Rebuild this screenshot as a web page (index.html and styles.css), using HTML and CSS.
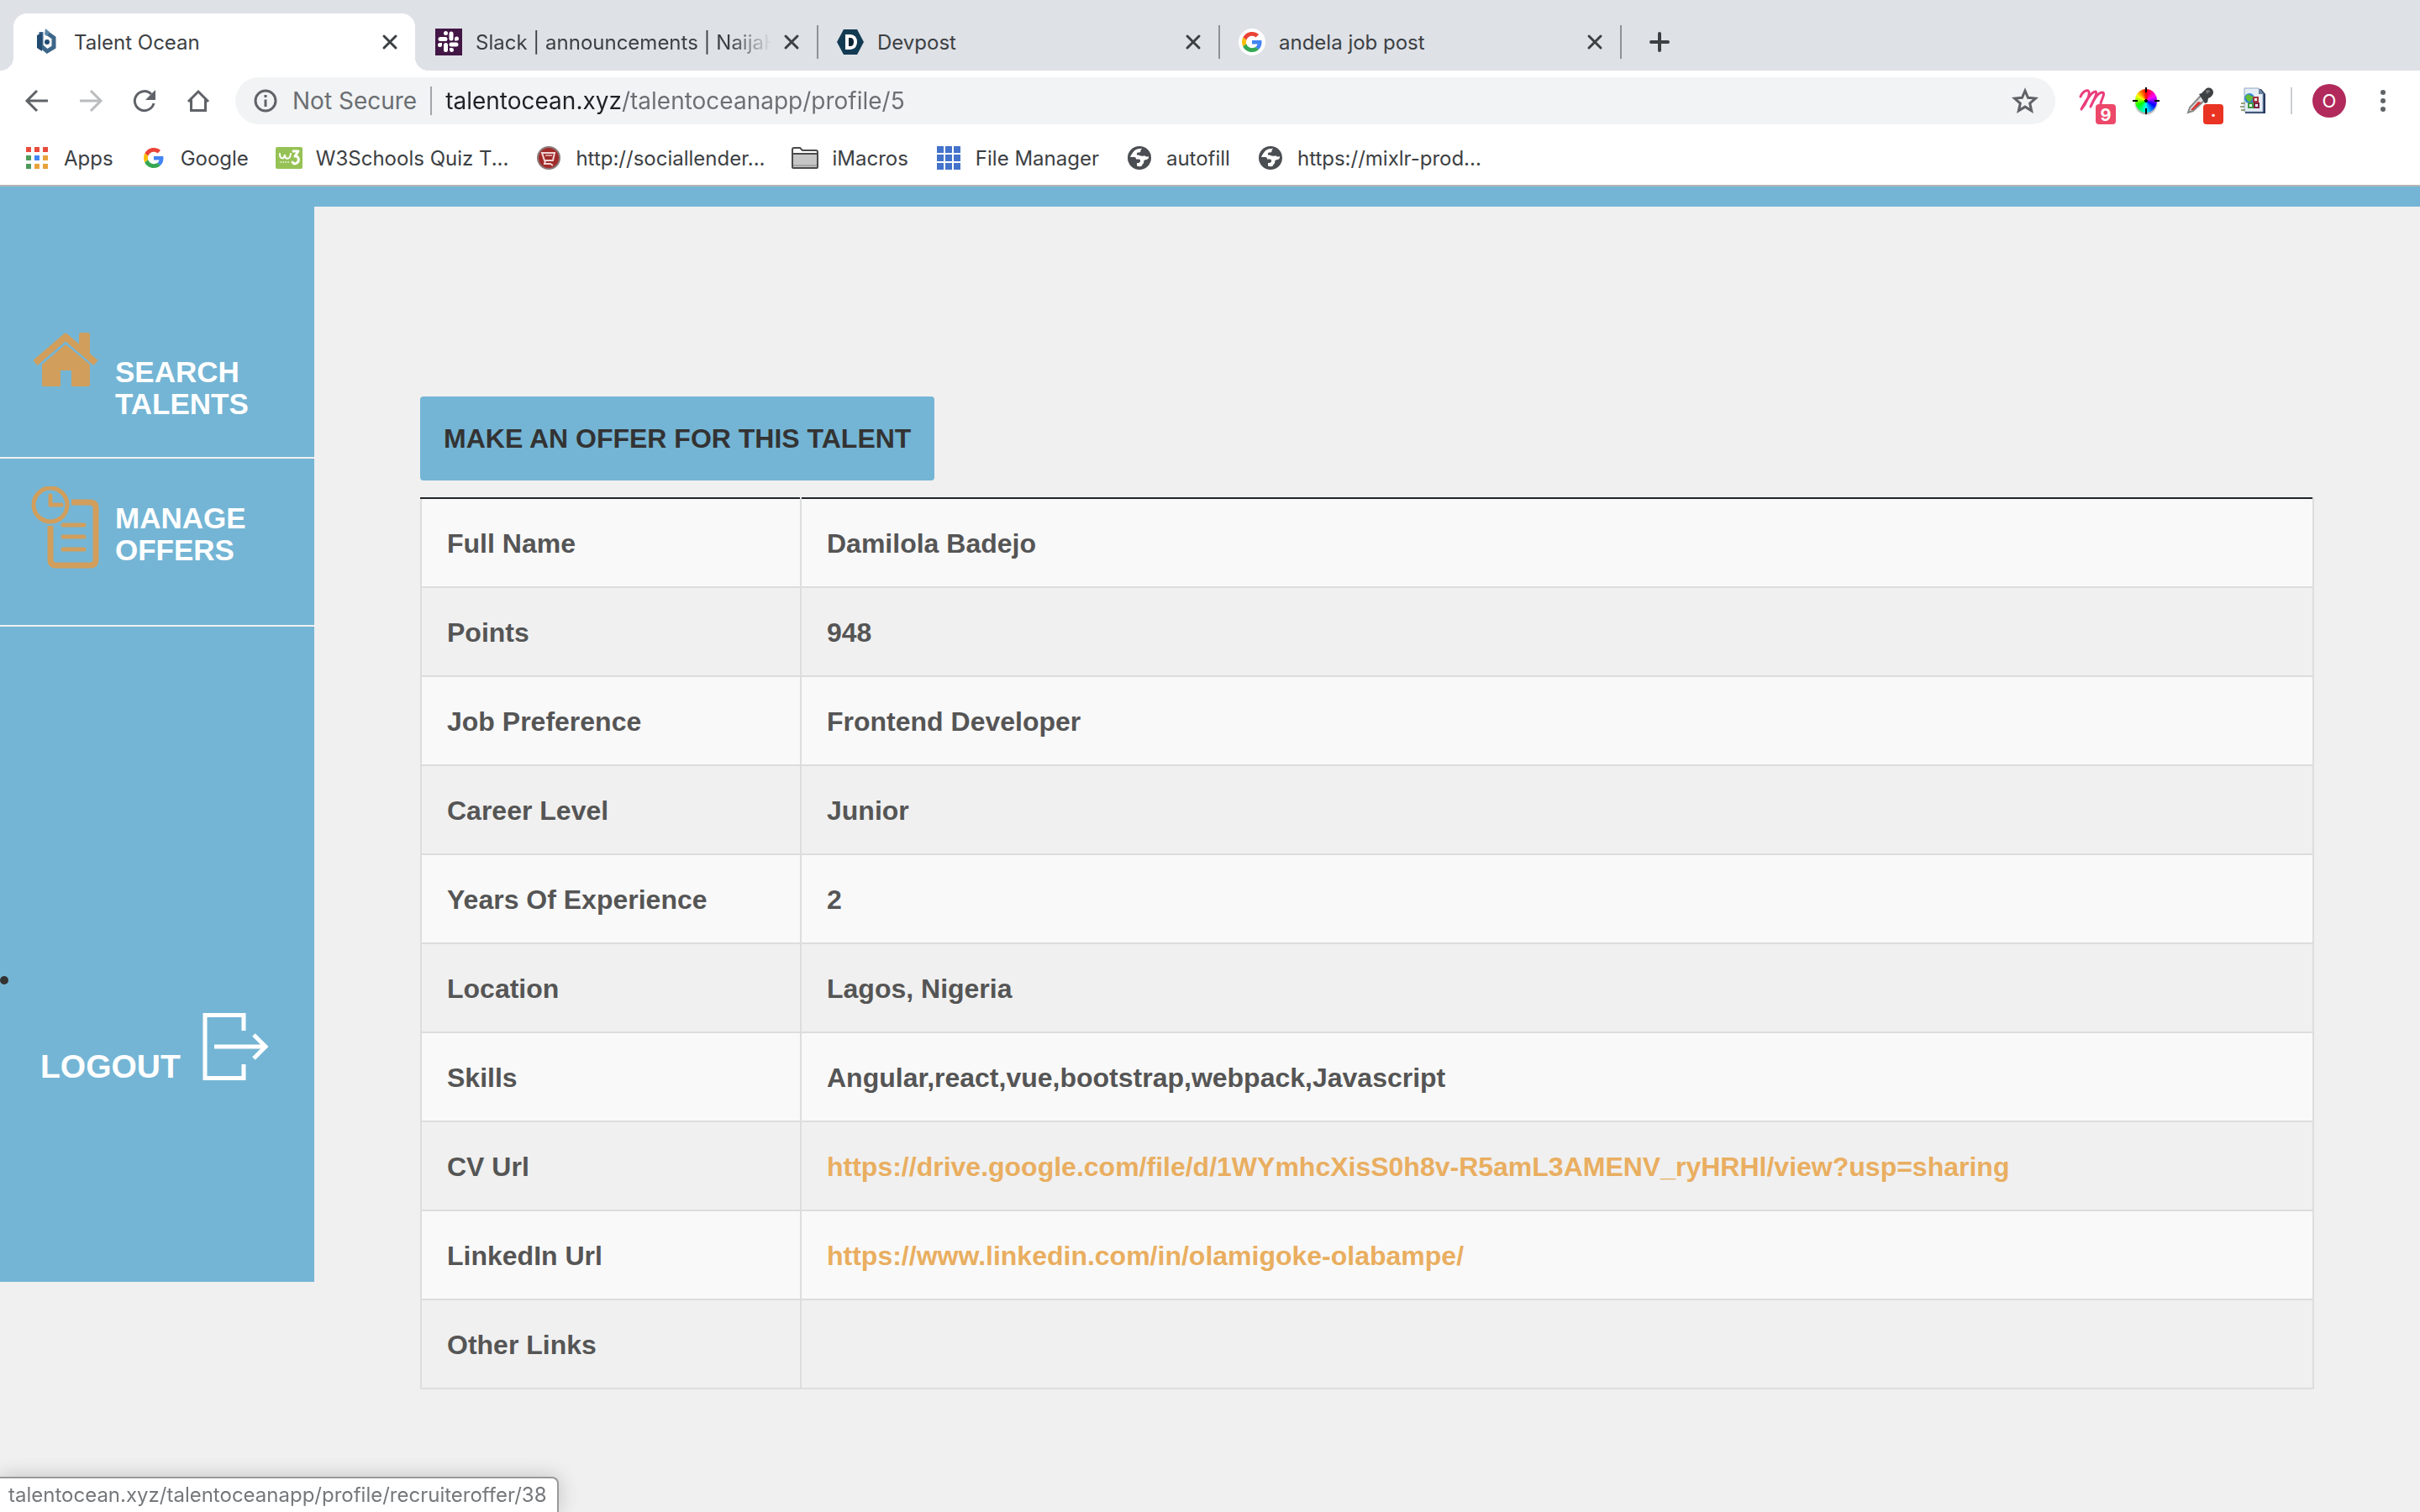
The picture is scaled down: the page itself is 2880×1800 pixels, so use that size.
FILE: index.html
```html
<!DOCTYPE html>
<html lang="en">
<head>
    <meta charset="UTF-8">
    <meta name="viewport" content="width=device-width, initial-scale=1.0">
    <title>Talent Ocean</title>
    <link rel="stylesheet" href="styles.css">
</head>
<body>

<!-- Shared icons -->
<svg class="sprite" aria-hidden="true">
    <symbol id="close" viewBox="0 0 32 32">
        <path d="M9 9l14 14M23 9L9 23" fill="none" stroke="#3c4043" stroke-width="3" stroke-linecap="round"/>
    </symbol>
    <symbol id="google" viewBox="0 0 48 48">
        <path fill="#ea4335" d="M24 9.500c3.500 0 6.700 1.200 9.200 3.600l6.900-6.900C35.900 2.400 30.500 0 24 0 14.600 0 6.500 5.400 2.600 13.200l8 6.200C12.400 13.700 17.700 9.500 24 9.500z"/>
        <path fill="#4285f4" d="M47 24.500c0-1.600-.2-3.100-.4-4.500H24v9h12.900c-.6 3-2.300 5.500-4.800 7.200l7.700 6C44.400 38 47 31.800 47 24.500z"/>
        <path fill="#fbbc05" d="M10.500 28.600c-.5-1.500-.8-3-.8-4.600s.3-3.100.8-4.600l-8-6.200C.9 16.500 0 20.100 0 24s.9 7.500 2.600 10.800l7.900-6.200z"/>
        <path fill="#34a853" d="M24 48c6.500 0 11.900-2.100 15.900-5.800l-7.700-6c-2.200 1.500-4.900 2.300-8.200 2.300-6.300 0-11.600-4.200-13.500-9.900l-8 6.200C6.500 42.600 14.600 48 24 48z"/>
    </symbol>
    <symbol id="globe" viewBox="0 0 32 32">
        <circle cx="16" cy="16" r="14" fill="#4b4e52"/>
        <path fill="#fff" d="M18 5c-4-.5-7 1-9 3.500-1.500 2-3 4-4 6.500h5c1.500 0 2 1 2 2.500h3c2 0 2 1 2 2.500 0 1-1 1.500-2 2h-2v3.500c2 1 4 1 6 0 0-2 1.500-2 2-3.500.5-1 0-2 .5-3 1-1 3-.5 5-2 .5-1 .5-2 .5-3-2 1-4 .5-5-1-1 1-2.500 1-4 .5-2-.5-3.500-1-5-1-.5-1.500 0-2.500 1-3h2c1 0 1.500-1 1.500-2 0-1.500 2-2 .5-3.500z"/>
    </symbol>
</svg>

<header class="browser">
    <div class="tab-strip">
        <div class="tab active">
            <svg class="favicon" viewBox="0 0 32 32">
                <path d="M9 4v17l7 6 8-5V11l-7-5" fill="none" stroke="#3d6689" stroke-width="5"/>
                <path d="M4 8v15l6 4V5z" fill="#234a70"/>
                <path d="M14 0l5 4-3 5-3-2z" fill="#5d86a6"/>
                <circle cx="16" cy="16" r="3" fill="#234a70"/>
            </svg>
            <a href="#" class="tab-title">Talent Ocean</a>
            <button class="tab-close" aria-label="Close tab"><svg><use href="#close"/></svg></button>
        </div>
        <div class="tab">
            <svg class="favicon" viewBox="0 0 32 32">
                <rect width="32" height="32" fill="#421645"/>
                <path d="M12.500 19.500v6M12 12.500H6M19 12V6M19 19h6" stroke="#fff" stroke-width="5" stroke-linecap="round"/>
                <path d="M12.500 8a2.500 2.500 0 1 0-2.500-2.500 2.500 2.500 0 0 0 2.500 2.500zM25.500 14.500H23V12a2.500 2.500 0 1 1 2.500 2.500zM19 23h-2v2.500a2.500 2.500 0 1 0 2-2.500zM8 17H5.500a2.500 2.500 0 1 0 2.500 2.500z" fill="#fff"/>
            </svg>
            <a href="#" class="tab-title faded">Slack | announcements | NaijaH</a>
            <button class="tab-close" aria-label="Close tab"><svg><use href="#close"/></svg></button>
        </div>
        <div class="tab divided">
            <svg class="favicon" viewBox="0 0 32 32">
                <path d="M8 1h16l8 15-8 15H8L0 16z" fill="#123b53"/>
                <path d="M12 9h4c4 0 6 3 6 7s-2 7-6 7h-4z" fill="#0c2434" stroke="#fff" stroke-width="4"/>
            </svg>
            <a href="#" class="tab-title">Devpost</a>
            <button class="tab-close" aria-label="Close tab"><svg><use href="#close"/></svg></button>
        </div>
        <div class="tab divided">
            <svg class="favicon" viewBox="0 0 32 32">
                <circle cx="16" cy="16" r="16" fill="#fff"/>
                <use href="#google" x="4" y="4" width="24" height="24"/>
            </svg>
            <a href="#" class="tab-title">andela job post</a>
            <button class="tab-close" aria-label="Close tab"><svg><use href="#close"/></svg></button>
        </div>
        <button class="new-tab" aria-label="New tab">
            <svg viewBox="0 0 32 32"><path d="M16 6v20M6 16h20" stroke="#3c4043" stroke-width="4" stroke-linecap="round"/></svg>
        </button>
    </div>

    <div class="toolbar">
        <button class="tool" aria-label="Back">
            <svg viewBox="0 0 32 32"><path d="M29 16H5M16 4L4 16l12 12" fill="none" stroke="#5f6368" stroke-width="3"/></svg>
        </button>
        <button class="tool" aria-label="Forward">
            <svg viewBox="0 0 32 32"><path d="M3 16h24M16 4l12 12-12 12" fill="none" stroke="#babcbe" stroke-width="3"/></svg>
        </button>
        <button class="tool" aria-label="Reload">
            <svg viewBox="0 0 32 32"><path d="M27 19a11.500 11.500 0 1 1-3-11" fill="none" stroke="#5f6368" stroke-width="3"/><path d="M29 3v12H17z" fill="#5f6368"/></svg>
        </button>
        <button class="tool" aria-label="Home">
            <svg viewBox="0 0 32 32"><path d="M4 17L16 5l12 12M7.500 14v13.500h17V14" fill="none" stroke="#5f6368" stroke-width="3"/></svg>
        </button>

        <div class="address-bar">
            <svg viewBox="0 0 32 32">
                <circle cx="16" cy="16" r="12" fill="none" stroke="#5f6368" stroke-width="3"/>
                <path d="M16 9v3M16 14.500v8.500" stroke="#5f6368" stroke-width="3"/>
            </svg>
            <label for="address" class="security">Not Secure</label>
            <input type="text" id="address" class="address" value="talentocean.xyz/talentoceanapp/profile/5">
            <button class="star" aria-label="Bookmark this page">
                <svg viewBox="0 0 32 32"><path d="M16 4l3.500 8.300 9 .8-6.800 5.900 2 8.800L16 23.100l-7.700 4.700 2-8.800-6.800-5.900 9-.8z" fill="none" stroke="#5f6368" stroke-width="3"/></svg>
            </button>
        </div>

        <div class="extensions">
            <button class="tool" aria-label="Momentum">
                <svg viewBox="0 0 32 32"><path d="M2 11C4 6 8 3 11 4c4 3-3 16-8 22C9 15 15 5 20 5c3 2-4 13-6 18C18 14 23 6 28 6c4 1-1 8-2 13" fill="none" stroke="#ea3d7c" stroke-width="3" stroke-linecap="round" stroke-linejoin="round"/></svg>
                <span class="badge pink">9</span>
            </button>
            <button class="tool" aria-label="Color picker">
                <span class="wheel"><svg viewBox="0 0 32 32"><path d="M16 0v6M16 25v7M0 16h6M26 16h6M16 14v4M14 16h4" stroke="#000" stroke-width="2"/></svg></span>
            </button>
            <button class="tool" aria-label="Eyedropper">
                <svg viewBox="0 0 32 32">
                    <path d="M2 30l2-6L17 10l5 5L8 28z" fill="#ddd" stroke="#888" stroke-width="2"/>
                    <path d="M5 27l9-10 4 1L8 27z" fill="#d93434"/>
                    <path d="M15 8l3-1 5-5c3-3 9-1 9 4 0 3-3 6-6 7l-1 5-3 1z" fill="#3d4144"/>
                    <path d="M23 4c2-2 5-1 5 1l-4 3z" fill="#777"/>
                </svg>
                <span class="badge red">·</span>
            </button>
            <button class="tool" aria-label="Page tool">
                <svg viewBox="0 0 32 32">
                    <path d="M6 2h19l5 6v23H6z" fill="#26395e"/>
                    <path d="M5 1h17l5 6v22H5z" fill="#e5edf6" stroke="#8fa6c0" stroke-width="1"/>
                    <path d="M22 1v7h6z" fill="#68809c"/>
                    <circle cx="11" cy="13" r="6" fill="#3285cf"/>
                    <path d="M6 12c3-5 5-4 6-2l4 1-3 5c-3 3-4 0-7-4z" fill="#61bd32"/>
                    <g fill="#eef2f8" stroke-width="2">
                        <path d="M16 12h5v5h-5z" stroke="#a2333e"/>
                        <path d="M10 19h5v5h-5z" stroke="#3f9b42"/>
                        <path d="M17 19h5v5h-5z" stroke="#7a2545"/>
                    </g>
                    <path d="M1 19h5M0 23h5M1 27h5" stroke="#96a17e" stroke-width="2"/>
                </svg>
            </button>
        </div>
        <button class="avatar" aria-label="Profile">O</button>
        <button class="tool menu" aria-label="Menu">
            <svg viewBox="0 0 32 32"><g fill="#5f6368"><circle cx="16" cy="6" r="3"/><circle cx="16" cy="16" r="3"/><circle cx="16" cy="26" r="3"/></g></svg>
        </button>
    </div>

    <nav class="bookmarks">
        <a href="#">
            <svg viewBox="0 0 32 32">
                <path d="M3 3h6v6H3zM13 3h6v6h-6zM23 3h6v6h-6z" fill="#e94b3c"/>
                <path d="M3 13h6v6H3zM3 23h6v6H3z" fill="#4e9a5b"/>
                <path d="M13 13h6v6h-6z" fill="#4285f4"/>
                <path d="M23 13h6v6h-6zM13 23h6v6h-6zM23 23h6v6h-6z" fill="#e8a33b"/>
            </svg>
            Apps
        </a>
        <a href="#">
            <svg viewBox="0 0 32 32"><use href="#google" x="4" y="4" width="24" height="24"/></svg>
            Google
        </a>
        <a href="#">
            <svg viewBox="0 0 32 32">
                <rect y="3" width="32" height="26" rx="2" fill="#96c255"/>
                <path d="M5 11c0 7 5 7 6 1 0 6 6 7 7-1" fill="none" stroke="#fff" stroke-width="2" stroke-linecap="round"/>
                <path d="M21 8h6l-4 6c6-1 6 9-1 9l-2-2" fill="none" stroke="#fff" stroke-width="3" stroke-linecap="round" stroke-linejoin="round"/>
                <path d="M5 21h11" stroke="#e3f0cd" stroke-width="2" stroke-dasharray="1 1"/>
            </svg>
            W3Schools Quiz T...
        </a>
        <a href="#">
            <svg viewBox="0 0 32 32">
                <circle cx="16" cy="16" r="13" fill="#a12b2b" stroke="#8d7a7a" stroke-width="2"/>
                <path d="M8 10h15l-2 9H11zM12 19l-1 4h7l3 2" fill="none" stroke="#f0d6d6" stroke-width="2"/>
                <path d="M12 13h8" stroke="#d49a9a" stroke-width="2"/>
            </svg>
            http://sociallender...
        </a>
        <a href="#">
            <svg viewBox="0 0 32 32">
                <path d="M1 27V6c0-1 1-2 2-2h7l3 3h16c1 0 2 1 2 2v18c0 1-1 1-1 1H2c-1 0-1-1-1-1z" fill="#fff" stroke="#4a4a4a" stroke-width="2"/>
                <path d="M2 11h28v16H2z" fill="#c6c6c6"/>
                <path d="M1 11h30" stroke="#4a4a4a" stroke-width="2"/>
                <path d="M2 25h28" stroke="#a5a5a5" stroke-width="2"/>
            </svg>
            iMacros
        </a>
        <a href="#">
            <svg viewBox="0 0 32 32"><path d="M2 2h8v8H2zM12 2h8v8h-8zM22 2h8v8h-8zM2 12h8v8H2zM12 12h8v8h-8zM22 12h8v8h-8zM2 22h8v8H2zM12 22h8v8h-8zM22 22h8v8h-8z" fill="#4473cc"/></svg>
            File Manager
        </a>
        <a href="#"><svg><use href="#globe"/></svg>autofill</a>
        <a href="#"><svg><use href="#globe"/></svg>https://mixlr-prod...</a>
    </nav>
</header>

<div class="top-bar"></div>

<div class="page">
    <aside class="sidebar">
        <ul class="menu-list">
            <li class="search">
                <a href="#">
                    <svg viewBox="0 0 82 98">
                        <path d="M5 36L41 5l36 31" fill="none" stroke="#d19e5c" stroke-width="8" stroke-linejoin="round"/>
                        <path d="M57 3q0-3 3-3h8q2 0 2 3v25L57 17z" fill="#d19e5c"/>
                        <path d="M41 14l29 24v24q0 2-2 2H48V45H35v19H15q-2 0-2-2V38z" fill="#d19e5c"/>
                    </svg>
                    <span>SEARCH<br>TALENTS</span>
                </a>
            </li>
            <li class="manage">
                <a href="#">
                    <svg viewBox="0 0 82 98">
                        <g fill="none" stroke="#d19e5c">
                            <circle cx="23" cy="22" r="20" stroke-width="5"/>
                            <path d="M23 11v11h13" stroke-width="5" stroke-linecap="round" stroke-linejoin="round"/>
                            <path d="M48 19h22q7 0 7 7v61q0 7-7 7H30q-7 0-7-7V47" stroke-width="7"/>
                            <path d="M38 46h25M38 60h25M38 75h25" stroke-width="5" stroke-linecap="round"/>
                        </g>
                    </svg>
                    <span>MANAGE<br>OFFERS</span>
                </a>
            </li>
            <li class="logout">
                <a href="#">
                    <span>LOGOUT</span>
                    <svg viewBox="0 0 80 80">
                        <path d="M49 21V2.500H3v75h46V61M14 40h60M61 26l14 14-14 14" fill="none" stroke="#fff" stroke-width="5"/>
                    </svg>
                </a>
            </li>
        </ul>
    </aside>

    <main class="content">
        <button class="offer-button">MAKE AN OFFER FOR THIS TALENT</button>

        <table class="profile">
            <tr><th scope="row">Full Name</th><td>Damilola Badejo</td></tr>
            <tr><th scope="row">Points</th><td>948</td></tr>
            <tr><th scope="row">Job Preference</th><td>Frontend Developer</td></tr>
            <tr><th scope="row">Career Level</th><td>Junior</td></tr>
            <tr><th scope="row">Years Of Experience</th><td>2</td></tr>
            <tr><th scope="row">Location</th><td>Lagos, Nigeria</td></tr>
            <tr><th scope="row">Skills</th><td>Angular,react,vue,bootstrap,webpack,Javascript</td></tr>
            <tr><th scope="row">CV Url</th><td><a href="#">https://drive.google.com/file/d/1WYmhcXisS0h8v-R5amL3AMENV_ryHRHl/view?usp=sharing</a></td></tr>
            <tr><th scope="row">LinkedIn Url</th><td><a href="#">https://www.linkedin.com/in/olamigoke-olabampe/</a></td></tr>
            <tr><th scope="row">Other Links</th><td></td></tr>
        </table>
    </main>
</div>

<div class="status">talentocean.xyz/talentoceanapp/profile/recruiteroffer/38</div>

</body>
</html>
```

FILE: styles.css
```css
* {
    box-sizing: border-box;
}
body {
    margin: 0;
    min-height: 100vh;
    background-color: #f0f0f0;
    font-family: "Liberation Sans", Arial, sans-serif;
    color: #333;
}
a {
    color: inherit;
    text-decoration: none;
}
button {
    margin: 0;
    padding: 0;
    border: none;
    background: none;
    font-family: inherit;
    cursor: pointer;
}
.sprite {
    display: none;
}

/* Browser frame */
.browser {
    background-color: #fff;
    border-bottom: 2px solid #b6b6b6;
    font-family: Inter, Roboto, sans-serif;
    font-size: 24px;
    color: #3c4043;
}
.browser svg {
    display: block;
    flex: none;
    width: 32px;
    height: 32px;
}
.tab-strip {
    display: flex;
    align-items: center;
    height: 84px;
    padding: 16px 16px 0;
    background-color: #dee1e6;
}
.tab {
    display: flex;
    align-items: center;
    gap: 16px;
    width: 478px;
    height: 40px;
    padding: 0 14px 0 24px;
}
.tab.active {
    position: relative;
    height: 68px;
    background-color: #fff;
    border-radius: 16px 16px 0 0;
}
.tab.active::before,
.tab.active::after {
    content: "";
    position: absolute;
    bottom: 0;
    width: 16px;
    height: 16px;
}
.tab.active::before {
    left: -16px;
    background: radial-gradient(circle at 0 0, #dee1e6 16px, #fff 16px);
}
.tab.active::after {
    right: -16px;
    background: radial-gradient(circle at 100% 0, #dee1e6 16px, #fff 16px);
}
.tab.divided {
    padding-left: 22px;
    border-left: 2px solid #8e9196;
}
.tab-title {
    flex: 1;
    min-width: 0;
    white-space: nowrap;
}
.tab-title.faded {
    -webkit-mask-image: linear-gradient(to right, #000 86%, transparent 100%);
    mask-image: linear-gradient(to right, #000 86%, transparent 100%);
}
.tab-close {
    margin-left: -8px;
}
.new-tab {
    display: flex;
    align-items: center;
    justify-content: center;
    width: 92px;
    height: 40px;
    border-left: 2px solid #8e9196;
}
.toolbar {
    display: flex;
    align-items: center;
    height: 72px;
    padding: 0 12px;
}
.tool {
    position: relative;
    display: flex;
    align-items: center;
    justify-content: center;
    width: 64px;
    height: 56px;
}
.address-bar {
    flex: 1;
    display: flex;
    align-items: center;
    gap: 16px;
    height: 56px;
    margin: 0 12px;
    padding: 0 20px;
    background-color: #f1f3f4;
    border-radius: 28px;
    font-size: 28px;
}
.security {
    padding-right: 16px;
    border-right: 2px solid #a3a6a9;
    color: #6b6e72;
}
.address {
    flex: 1;
    padding: 0;
    border: none;
    outline: none;
    font: inherit;
    color: transparent;
    /* host name is darker than the path */
    background: linear-gradient(to right, #202124 210px, #6b6e72 210px);
    -webkit-background-clip: text;
    background-clip: text;
}
.extensions {
    display: flex;
}
.extensions::after {
    content: "";
    width: 2px;
    height: 32px;
    margin: 12px 24px 0 12px;
    background-color: #ccced1;
}
.badge {
    position: absolute;
    right: 4px;
    bottom: 0;
    width: 24px;
    height: 24px;
    border-radius: 4px;
    color: #fff;
    font-size: 20px;
    font-weight: bold;
    line-height: 26px;
    text-align: center;
}
.badge.pink {
    background-color: #ec4869;
}
.badge.red {
    background-color: #e93323;
}
.wheel {
    display: flex;
    align-items: center;
    justify-content: center;
    width: 26px;
    height: 28px;
    background: conic-gradient(red, magenta, blue, cyan, lime, yellow, red);
    border-radius: 50%;
    box-shadow: 0 2px 2px rgba(0, 0, 0, 0.4);
}
.avatar {
    width: 40px;
    height: 40px;
    border-radius: 50%;
    background-color: #b12a5b;
    color: #fff;
    font-size: 22px;
}
.menu {
    margin-left: 12px;
}
.bookmarks {
    display: flex;
    align-items: center;
    gap: 32px;
    height: 64px;
    padding-left: 28px;
}
.bookmarks a {
    display: flex;
    align-items: center;
    gap: 16px;
    white-space: nowrap;
}

/* Page */
.top-bar {
    height: 24px;
    background-color: #74b5d5;
}
.page {
    display: flex;
    align-items: flex-start;
}
.sidebar {
    flex: none;
    width: 374px;
    padding-bottom: 240px;
    background-color: #74b5d5;
    color: #fff;
    font-size: 35px;
    font-weight: bold;
    line-height: 38px;
}
.menu-list {
    margin: 0;
    padding: 0;
    list-style: none;
}
.menu-list a {
    display: flex;
    gap: 18px;
    padding-left: 37px;
}
.menu-list svg {
    display: block;
    width: 82px;
    height: 98px;
}
.search,
.manage {
    border-bottom: 2px solid #f0f0f0;
}
.search {
    height: 300px;
    padding-top: 150px;
}
.search span {
    padding-top: 28px;
}
.manage {
    height: 200px;
    padding-top: 33px;
}
.manage span {
    padding-top: 19px;
}
.logout {
    padding-top: 416px;
    font-size: 39px;
    line-height: 32px;
}
.logout::before {
    content: "";
    display: block;
    width: 10px;
    height: 10px;
    margin-bottom: 34px;
    border-radius: 50%;
    background-color: #333;
}
.logout a {
    align-items: flex-end;
    gap: 26px;
    padding-left: 48px;
}
.logout svg {
    width: 80px;
    height: 80px;
}
.content {
    flex: 1;
    padding: 226px 126px 60px;
}
.offer-button {
    display: block;
    height: 100px;
    margin-bottom: 20px;
    padding: 0 28px;
    background-color: #74b5d5;
    border-radius: 4px;
    color: #333;
    font-size: 32px;
    font-weight: bold;
}
.profile {
    width: 100%;
    border-collapse: collapse;
    font-size: 32px;
    line-height: 40px;
    font-weight: bold;
    color: #555;
}
.profile th,
.profile td {
    height: 106px;
    padding: 2px 30px 0;
    border: 2px solid #ddd;
    text-align: left;
}
.profile th {
    width: 452px;
}
.profile tr:nth-child(odd) {
    background-color: #f9f9f9;
}
.profile tr:first-child th,
.profile tr:first-child td {
    border-top-color: #212529;
}
.profile a {
    color: #e9ae60;
}

/* Link preview in the corner of the window */
.status {
    position: fixed;
    left: 0;
    bottom: 0;
    height: 42px;
    padding: 0 12px 0 10px;
    border-top: 2px solid #999;
    border-right: 2px solid #999;
    border-radius: 0 8px 0 0;
    background-color: #fff;
    box-shadow: 0 0 24px rgba(0, 0, 0, 0.2);
    font-family: Inter, Roboto, sans-serif;
    font-size: 24px;
    line-height: 40px;
    color: #75787b;
}
```
